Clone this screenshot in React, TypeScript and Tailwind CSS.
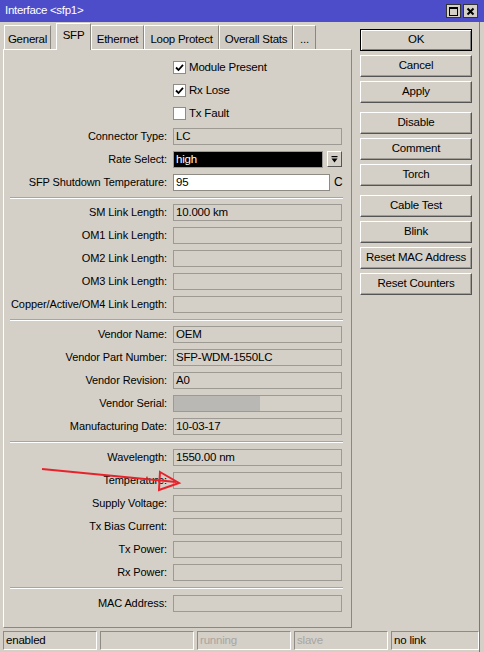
import React from 'react'

const FONT = { fontFamily: '"Liberation Sans", Arial, sans-serif' }

function Field({ value, children }: { value?: string; children?: React.ReactNode }) {
  return (
    <div className="relative h-[17px] w-[169px] border border-[#9d9a94] bg-[#d4d0c8] px-[2px] text-[11.5px] leading-[15px] tracking-[-0.2px] text-black overflow-hidden">
      {value}
      {children}
    </div>
  )
}

function Row({ label, children }: { label: string; children: React.ReactNode }) {
  return (
    <div className="flex h-[23px] items-start">
      <div className="w-[164px] pr-[1px] text-right text-[11px] leading-[17px] tracking-[-0.1px] text-black whitespace-nowrap">
        {label}
      </div>
      <div className="ml-[5px]">{children}</div>
    </div>
  )
}

function Sep({ h = 'h-[8px]' }: { h?: string }) {
  return (
    <div className={`${h} pl-[6px] pr-[8px]`}>
      <div className="border-t border-[#a8a59f]" />
      <div className="border-t border-white" />
    </div>
  )
}

function Check({ label, checked }: { label: string; checked?: boolean }) {
  return (
    <div className="flex h-[23px] items-start">
      <div className="ml-[169px] flex h-[17px] items-center gap-[3px]">
        <div className="flex h-[13px] w-[13px] items-center justify-center border border-[#8f8c86] bg-white">
          {checked && (
            <svg width="9" height="9" viewBox="0 0 9 9">
              <path d="M1 4.5 L3.5 7 L8 1.8" stroke="black" strokeWidth="1.8" fill="none" />
            </svg>
          )}
        </div>
        <span className="text-[11.5px] tracking-[-0.2px] text-black">{label}</span>
      </div>
    </div>
  )
}

function Btn({ label, primary }: { label: string; primary?: boolean }) {
  return (
    <div
      className={`flex h-[22px] w-[112px] items-center justify-center text-[11.5px] tracking-[-0.2px] text-black ${
        primary
          ? 'border border-black shadow-[inset_1px_1px_0_#fff,inset_-1px_-1px_0_#808080]'
          : 'border border-t-white border-l-white border-r-[#555] border-b-[#555] shadow-[inset_-1px_-1px_0_#a09c96]'
      }`}
    >
      {label}
    </div>
  )
}

function Tab({ label, active, w }: { label: string; active?: boolean; w: string }) {
  return (
    <div
      className={`${w} flex items-start justify-center border-l border-t border-r border-l-white border-t-white border-r-[#8a8781] text-[11.5px] tracking-[-0.25px] text-black ${
        active ? 'relative z-10 -mb-[1px] h-[27px] pt-[3px] bg-[#d4d0c8]' : 'h-[24px] pt-[5px] bg-[#d0ccc4]'
      }`}
    >
      {label}
    </div>
  )
}

function Status({ text, w, grey }: { text: string; w: string; grey?: boolean }) {
  return (
    <div
      className={`${w} h-[19px] border border-t-[#8e8b85] border-l-[#8e8b85] border-b-white border-r-white px-[2px] text-[11.5px] leading-[17px] tracking-[-0.2px] ${
        grey ? 'text-[#a8a5a0]' : 'text-black'
      }`}
    >
      {text}
    </div>
  )
}

export default function App() {
  return (
    <div className="relative h-[652px] w-[484px] overflow-hidden bg-[#d4d0c8]" style={FONT}>
      {/* title bar */}
      <div className="flex h-[22px] items-center justify-between bg-[#4d4dca] pl-[5px] pr-[6px]">
        <span className="text-[11.5px] tracking-[-0.3px] text-white">Interface &lt;sfp1&gt;</span>
        <div className="flex gap-[2px]">
          <div className="flex h-[14px] w-[15px] items-center justify-center border border-[#333] bg-[#d4d0c8]">
            <div className="h-[9px] w-[9px] border border-black border-t-2" />
          </div>
          <div className="flex h-[14px] w-[15px] items-center justify-center border border-[#333] bg-[#d4d0c8]">
            <svg width="9" height="9" viewBox="0 0 9 9">
              <path d="M1.5 1.5 L7.5 7.5 M7.5 1.5 L1.5 7.5" stroke="black" strokeWidth="2" />
            </svg>
          </div>
        </div>
      </div>

      <div className="flex">
        {/* left column */}
        <div className="ml-[3px] w-[349px]">
          <div className="flex h-[27px] items-end pl-[1px]">
            <Tab label="General" w="w-[47px]" />
            <div className="w-[5px]" />
            <Tab label="SFP" w="w-[35px]" active />
            <Tab label="Ethernet" w="w-[53px]" />
            <Tab label="Loop Protect" w="w-[75px]" />
            <Tab label="Overall Stats" w="w-[74px]" />
            <Tab label="..." w="w-[23px]" />
          </div>
          <div className="h-[579px] border border-t-white border-l-white border-r-[#8a8781] border-b-[#8a8781] pt-[9px]">
            <Check label="Module Present" checked />
            <Check label="Rx Lose" checked />
            <Check label="Tx Fault" />
            <Row label="Connector Type:">
              <Field value="LC" />
            </Row>
            <Row label="Rate Select:">
              <div className="flex items-start gap-[4px]">
                <div className="h-[17px] w-[150px] border border-[#9d9a94] bg-black px-[2px] text-[11.5px] leading-[15px] tracking-[-0.2px] text-white">
                  high
                </div>
                <div className="flex h-[16px] w-[15px] items-center justify-center border border-t-white border-l-white border-r-[#555] border-b-[#555]">
                  <svg width="9" height="9" viewBox="0 0 9 9">
                    <rect x="1.5" y="1" width="6" height="1.2" fill="black" />
                    <path d="M1.5 3.5 H7.5 L4.5 7.5 Z" fill="black" />
                  </svg>
                </div>
              </div>
            </Row>
            <Row label="SFP Shutdown Temperature:">
              <div className="flex items-start">
                <div className="h-[17px] w-[157px] border border-[#8e8b85] bg-white px-[2px] text-[11.5px] leading-[15px] tracking-[-0.2px] text-black">
                  95
                </div>
                <span className="ml-[4px] text-[12px] leading-[17px] text-black">C</span>
              </div>
            </Row>
            <Sep h="h-[7px]" />
            <Row label="SM Link Length:">
              <Field value="10.000 km" />
            </Row>
            <Row label="OM1 Link Length:">
              <Field />
            </Row>
            <Row label="OM2 Link Length:">
              <Field />
            </Row>
            <Row label="OM3 Link Length:">
              <Field />
            </Row>
            <Row label="Copper/Active/OM4 Link Length:">
              <Field />
            </Row>
            <Sep h="h-[7px]" />
            <Row label="Vendor Name:">
              <Field value="OEM" />
            </Row>
            <Row label="Vendor Part Number:">
              <Field value="SFP-WDM-1550LC" />
            </Row>
            <Row label="Vendor Revision:">
              <Field value="A0" />
            </Row>
            <Row label="Vendor Serial:">
              <Field>
                <div className="absolute left-0 top-0 h-[15px] w-[86px] bg-[#b9b8b5]" />
              </Field>
            </Row>
            <Row label="Manufacturing Date:">
              <Field value="10-03-17" />
            </Row>
            <Sep />
            <Row label="Wavelength:">
              <Field value="1550.00 nm" />
            </Row>
            <Row label="Temperature:">
              <Field />
            </Row>
            <Row label="Supply Voltage:">
              <Field />
            </Row>
            <Row label="Tx Bias Current:">
              <Field />
            </Row>
            <Row label="Tx Power:">
              <Field />
            </Row>
            <Row label="Rx Power:">
              <Field />
            </Row>
            <Sep />
            <Row label="MAC Address:">
              <Field />
            </Row>
          </div>
        </div>

        {/* right column buttons */}
        <div className="ml-[8px] mt-[7px] flex flex-col">
          <div className="flex flex-col gap-[4px]">
            <Btn label="OK" primary />
            <Btn label="Cancel" />
            <Btn label="Apply" />
          </div>
          <div className="mt-[9px] flex flex-col gap-[4px]">
            <Btn label="Disable" />
            <Btn label="Comment" />
            <Btn label="Torch" />
          </div>
          <div className="mt-[9px] flex flex-col gap-[4px]">
            <Btn label="Cable Test" />
            <Btn label="Blink" />
            <Btn label="Reset MAC Address" />
            <Btn label="Reset Counters" />
          </div>
        </div>
      </div>

      {/* status bar */}
      <div className="mt-[3px] flex gap-[3px] pl-[3px]">
        <Status text="enabled" w="w-[94px]" />
        <Status text="" w="w-[94px]" />
        <Status text="running" w="w-[94px]" grey />
        <Status text="slave" w="w-[94px]" grey />
        <Status text="no link" w="w-[88px]" />
      </div>

      {/* window right edge */}
      <div className="absolute right-[4px] top-[22px] bottom-0 w-[1px] bg-[#7a7873]" />

      {/* red annotation arrow */}
      <svg className="pointer-events-none absolute left-0 top-0" width="484" height="652">
        <path d="M42 469 L176 482" stroke="#e8222a" strokeWidth="2" fill="none" />
        <path d="M160 472 L179 483 L159 490 Z" stroke="#e8222a" strokeWidth="2" fill="none" />
      </svg>
    </div>
  )
}
